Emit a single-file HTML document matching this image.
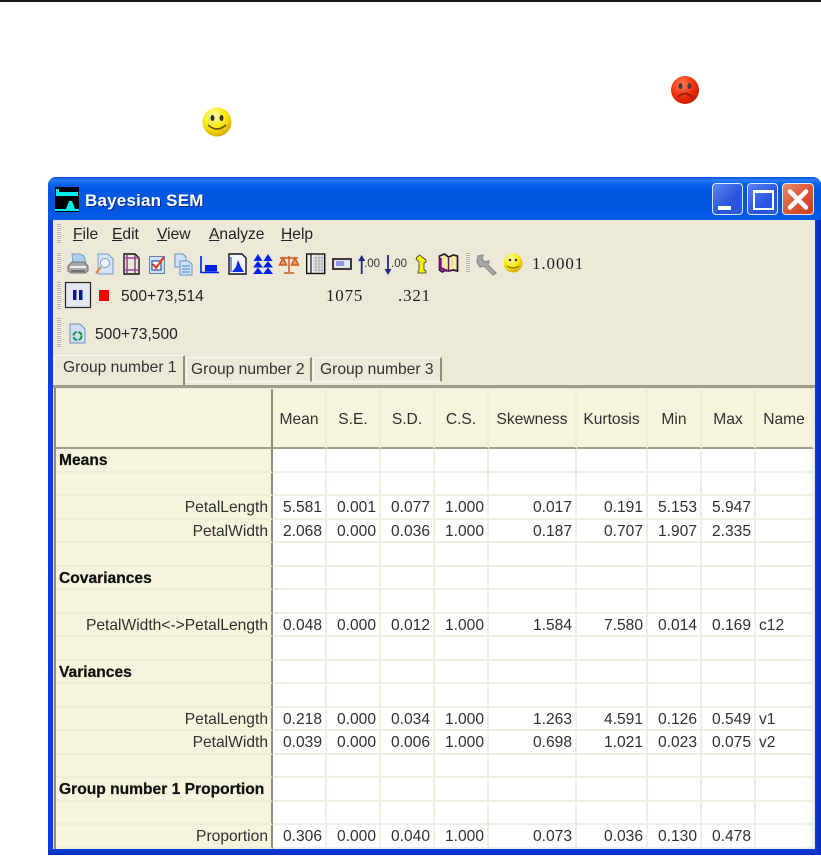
<!DOCTYPE html>
<html><head><meta charset="utf-8"><style>
html,body{margin:0;padding:0;background:#fff}
body{width:821px;height:856px;position:relative;overflow:hidden;font-family:"Liberation Sans",sans-serif;font-size:15.6px;color:#222;filter:blur(.3px)}
.a{position:absolute;white-space:nowrap;line-height:18px}
svg{position:absolute;overflow:visible}
.grip{position:absolute;width:4px;background:repeating-linear-gradient(#b5b2a0 0 1px,#f4f2e8 1px 2px)}
.grid{position:absolute;left:55px;top:389px;width:759px;display:grid;grid-template-columns:218px 54px 54px 54px 54px 88px 71px 54px 54px 58px;grid-template-rows:60px repeat(17,23.5px);background:#fff}
.grid div{box-sizing:border-box;border-right:2px solid #f0eee3;border-bottom:2px solid #f0eee3;text-align:right;padding-right:3px;line-height:24px;white-space:nowrap}
.grid div.h{background:#f5f4dc;text-align:center;padding:0;line-height:62px;border-bottom:2px solid #a09d8c;border-right-color:#eeeed8}
.grid div.l{background:#f5f4dc;border-right:2px solid #8f8c7b;border-bottom-color:#eeeed8;padding-right:3px}
.grid div.b{font-weight:bold;text-align:left;padding-left:4px;-webkit-text-stroke:.25px #111;color:#111}
.grid div.h.l{border-right:2px solid #8f8c7b;border-bottom:2px solid #a09d8c}
.grid div.n{text-align:left;padding-left:3px}
.btn{position:absolute;top:183px;width:31px;height:32px;box-sizing:border-box;border:1px solid #dfe8fb;border-radius:4px}
.s{font-family:"Liberation Serif",serif;font-size:17px;letter-spacing:.4px}
</style></head><body>
<div style="position:absolute;left:0;top:0;width:821px;height:2px;background:#1a1a1a"></div>

<svg style="left:670px;top:75px" width="30" height="30" viewBox="0 0 30 30"><defs><radialGradient id="r" cx=".4" cy=".3" r=".8"><stop offset="0" stop-color="#ff7a50"/><stop offset=".55" stop-color="#f0300a"/><stop offset="1" stop-color="#b81400"/></radialGradient><radialGradient id="y" cx=".4" cy=".3" r=".8"><stop offset="0" stop-color="#fffbb0"/><stop offset=".5" stop-color="#fce80c"/><stop offset="1" stop-color="#d09c00"/></radialGradient></defs><circle cx="15" cy="15" r="14" fill="url(#r)"/><ellipse cx="10.5" cy="11" rx="2" ry="3" fill="#4d3a3a"/><ellipse cx="19.5" cy="11" rx="2" ry="3" fill="#4d3a3a"/><path d="M8 22Q15 15 22 22" fill="none" stroke="#8a2010" stroke-width="1.6"/></svg>
<svg style="left:202px;top:107px" width="30" height="30" viewBox="0 0 30 30"><circle cx="15" cy="15" r="14.5" fill="url(#y)"/><ellipse cx="10.5" cy="11" rx="2" ry="3" fill="#333"/><ellipse cx="19.5" cy="11" rx="2" ry="3" fill="#333"/><path d="M6 18Q15 26 24 18" fill="none" stroke="#6a5a10" stroke-width="1.6"/></svg>

<!-- window -->
<div style="position:absolute;left:48px;top:177px;width:773px;height:678px;background:#0a3fd8;border-radius:8px 8px 0 0"></div>
<div style="position:absolute;left:48px;top:177px;width:773px;height:43px;border-radius:8px 8px 0 0;background:linear-gradient(#0a5ce0 0,#0a5ce0 1px,#2a7cf5 3px,#0a62ec 7px,#0058e2 14px,#0056de 30px,#0258e4 38px,#0a5ce8 43px)"></div>
<div style="position:absolute;left:48px;top:849px;width:773px;height:6px;background:linear-gradient(#0a3ee0,#0a28b8)"></div>
<div style="position:absolute;left:815px;top:220px;width:6px;height:635px;background:linear-gradient(90deg,#0a3ee0,#0a28b8)"></div>
<div style="position:absolute;left:53px;top:220px;width:762px;height:629px;background:#ece9d8"></div>

<svg style="left:55px;top:187px" width="24" height="25" viewBox="0 0 24 25"><rect width="24" height="25" fill="#000"/><rect x="1" y="2" width="5" height="7" fill="#0ee"/><rect x="1" y="5" width="22" height="4" fill="#0ee"/><rect x="4" y="2" width="19" height="3" fill="#000"/><path d="M11 22L14 14H17L20 22Z" fill="#0ee"/><rect x="0" y="22" width="24" height="2" fill="#0ee"/></svg>
<div class="a" style="left:85px;top:192px;color:#fff;font-weight:bold;font-size:17px;letter-spacing:.2px;text-shadow:1px 1px 0 #0a2a90">Bayesian SEM</div>

<div class="btn" style="left:712px;background:linear-gradient(135deg,#5b84ee,#2a55dc 60%,#2b5cdc)"><div style="position:absolute;left:5px;top:22px;width:13px;height:4px;background:#fff"></div></div>
<div class="btn" style="left:747px;background:linear-gradient(135deg,#5b84ee,#2a55dc 60%,#2b5cdc)"><div style="position:absolute;left:5px;top:6px;width:21px;height:20px;box-sizing:border-box;border:2px solid #fff;border-top-width:3px"></div></div>
<div class="btn" style="left:782px;width:32px;background:linear-gradient(135deg,#e88a6c,#d8502c 60%,#c84020)"><svg style="left:3px;top:4px" width="24" height="23" viewBox="0 0 24 23"><path d="M4 3.5L20 19.5M20 3.5L4 19.5" stroke="#fff" stroke-width="4.5" stroke-linecap="round"/></svg></div>

<!-- menu -->
<div class="grip" style="left:57px;top:224px;height:19px"></div>
<div class="a" style="left:73px;top:226px"><u>F</u>ile</div>
<div class="a" style="left:112px;top:226px"><u>E</u>dit</div>
<div class="a" style="left:157px;top:226px"><u>V</u>iew</div>
<div class="a" style="left:209px;top:226px"><u>A</u>nalyze</div>
<div class="a" style="left:281px;top:226px"><u>H</u>elp</div>

<!-- toolbar -->
<div class="grip" style="left:57px;top:253px;height:19px"></div>
<svg style="left:0;top:0" width="821" height="300" viewBox="0 0 821 300">
<!-- printer -->
<path d="M72 254h8l4 2 2 7H73z" fill="#a8d0f0" stroke="#7ea0c4"/><path d="M68 266l4-4h12l4 4v5l-3 2H71l-3-2z" fill="#a8a8a8" stroke="#707070"/><path d="M70 267h16" stroke="#f0f0f0" stroke-width="2"/><path d="M71 271h14" stroke="#606060" stroke-width="1.5"/>
<!-- page zoom -->
<path d="M98 254h10l5 5v15H98z" fill="#d2e4f8" stroke="#7a9cc8"/><circle cx="105" cy="263" r="4.5" fill="#eaf4ff" stroke="#8a9ab8"/><path d="M101 267l-5 6" stroke="#d89040" stroke-width="2.2"/>
<!-- page -->
<path d="M124 254h11l4 4v16h-15z" fill="#ece9d8" stroke="#111" stroke-width="1.4"/><path d="M127 255v18M135 255v18M124 258h15M124 270h15" stroke="#a040a0" stroke-width="1.6" fill="none"/>
<!-- check -->
<rect x="149.500" y="256.500" width="15" height="17" fill="#cfe0f6" stroke="#6080b0"/><rect x="152" y="261" width="9" height="9" fill="#fff" stroke="#3050a0" stroke-width="1.2"/><path d="M153 264l3 4 8-11" fill="none" stroke="#e83010" stroke-width="2"/>
<!-- copy -->
<path d="M175 254h8l3 3v10h-11z" fill="#cfe3f8" stroke="#6a90c8"/><path d="M180 261h8l4 3v11h-12z" fill="#cfe3f8" stroke="#6a90c8"/><path d="M182 266h8M182 269h8M182 272h8" stroke="#3a88d0"/>
<!-- chart -->
<path d="M201 256v16.500h18" fill="none" stroke="#0020e8" stroke-width="1.6"/><rect x="205" y="265" width="12" height="6.500" fill="#0020e8"/>
<!-- chart2 -->
<path d="M229 254h13l4 4v16h-17z" fill="#f4f6ff" stroke="#111" stroke-width="1.4"/><path d="M232 272l4-5 2-7 3 7 3 5z" fill="#0030e0"/><path d="M231 257v15" stroke="#0030e0"/>
<!-- triangles -->
<g fill="#0020f0"><path d="M253.500 261l4.500-7 4.500 7zM263.500 261l4.500-7 4.500 7zM253 267.500l5-6.500 5 6.500zM263 267.500l5-6.500 5 6.500zM253 274l5-6.500 5 6.500zM263 274l5-6.500 5 6.500z"/></g>
<!-- scale -->
<g fill="none" stroke="#c85a20" stroke-width="1.5"><path d="M280 258h18M289 256v16M284 273h10"/><path d="M279.500 265l3.500-7 3.500 7zM291.500 265l3.500-7 3.500 7z" fill="#f0a070"/></g>
<!-- table -->
<rect x="306.700" y="254" width="18" height="19.500" fill="#f0f0ee" stroke="#111" stroke-width="1.4"/><path d="M311 254v19.500" stroke="#111" stroke-width="1.2"/><path d="M313 258h11M313 261h11M313 264h11M313 267h11M313 270h11M316 255v18M319 255v18M322 255v18" stroke="#999" stroke-width=".8"/>
<!-- rect -->
<rect x="333" y="259" width="18" height="10" fill="#e4e4ec" stroke="#111" stroke-width="1.6"/><rect x="336" y="261" width="8" height="5" fill="#8f98e0"/>
<!-- arrows -->
<path d="M361.700 257v17" stroke="#202880" stroke-width="1.8"/><path d="M358.200 261l3.500-6 3.500 6z" fill="#202880"/>
<path d="M388 255v17" stroke="#202880" stroke-width="1.8"/><path d="M384.500 269l3.500 6 3.500-6z" fill="#202880"/>
<!-- hand -->
<path d="M417 257l3-2 2 2 4 3v2l-2 1v7l2 1v2h-8v-2l1-1v-8l-3-3z" fill="#f8f000" stroke="#333" stroke-width=".8"/>
<!-- book -->
<path d="M439.500 256l5-2 4 3 5-2 4 1v15l-4-1-5 1-3-1-3 2-3-2z" fill="#f4eea0" stroke="#301030" stroke-width="1.7"/><path d="M448.500 257v14" stroke="#601060" stroke-width="1.4"/><path d="M440.500 258v10l7 3" stroke="#801080" stroke-width="2.5" fill="none"/><path d="M452 258v9" stroke="#e8e0a0" stroke-width="2"/>
<!-- wrench -->
<path d="M478 256l5-1-1 4 3 3 4-1 0 0-1 4 8 8-3 2-9-9-4 1-3-5z" fill="#a8a8a8" stroke="#8a8a8a" stroke-width="1.2"/>
<!-- smile -->
<circle cx="513" cy="263" r="9.500" fill="url(#y)"/><circle cx="510" cy="260" r="1.300" fill="#333"/><circle cx="516" cy="260" r="1.300" fill="#333"/><path d="M507 266q6 4 12 0" fill="none" stroke="#6a5a10"/>
<!-- pause -->
<rect x="65.500" y="282.500" width="25" height="25" fill="#e4e6f0" stroke="#222" stroke-width="1.200"/><path d="M73 290h3.500v10H73zM79 290h3.500v10H79z" fill="#0a1a80"/>
<rect x="99" y="290" width="10" height="11" fill="#f00"/>
</svg>
<div class="a" style="left:364px;top:255px;font-size:11.5px;color:#333">.00</div>
<div class="a" style="left:391px;top:255px;font-size:11.5px;color:#333">.00</div>
<div class="grip" style="left:466px;top:253px;height:20px"></div>
<div class="a s" style="left:532px;top:255px;letter-spacing:.9px">1.0001</div>

<div class="grip" style="left:57px;top:282px;height:27px"></div>
<div class="a" style="left:121px;top:288px">500+73,514</div>
<div class="a s" style="left:326px;top:287px;letter-spacing:.8px">1075</div>
<div class="a s" style="left:398px;top:287px;letter-spacing:.8px">.321</div>

<div class="grip" style="left:57px;top:318px;height:30px"></div>
<svg style="left:69px;top:323px" width="17" height="21" viewBox="0 0 17 21"><path d="M1 1h10l5 5v14H1z" fill="#cfe0f6" stroke="#7090c0"/><circle cx="8.500" cy="13" r="4" fill="none" stroke="#189040" stroke-width="2" stroke-dasharray="5 1.500"/></svg>
<div class="a" style="left:95px;top:326px">500+73,500</div>

<!-- tabs -->
<div style="position:absolute;left:54px;top:355px;width:131px;height:30px;box-sizing:border-box;border:1px solid #fbfaf4;border-right:2px solid #8f8c7b;border-bottom:0;border-radius:2px 2px 0 0"></div>
<div style="position:absolute;left:186px;top:357px;width:126px;height:25px;box-sizing:border-box;border-top:1px solid #fbfaf4;border-left:1px solid #fbfaf4;border-right:2px solid #8f8c7b;border-bottom:1px solid #fbfaf4"></div>
<div style="position:absolute;left:313px;top:357px;width:129px;height:25px;box-sizing:border-box;border-top:1px solid #fbfaf4;border-left:1px solid #fbfaf4;border-right:2px solid #8f8c7b;border-bottom:1px solid #fbfaf4"></div>
<div class="a" style="left:63px;top:359px;color:#333">Group number 1</div>
<div class="a" style="left:191px;top:361px;color:#333">Group number 2</div>
<div class="a" style="left:320px;top:361px;color:#333">Group number 3</div>
<div style="position:absolute;left:53px;top:385px;width:762px;height:3px;background:#a09d8c"></div>

<div class="grid" style="color:#303030">
<div class="h l"></div><div class="h">Mean</div><div class="h">S.E.</div><div class="h">S.D.</div><div class="h">C.S.</div><div class="h">Skewness</div><div class="h">Kurtosis</div><div class="h">Min</div><div class="h">Max</div><div class="h">Name</div>

<div class="l b">Means</div><div></div><div></div><div></div><div></div><div></div><div></div><div></div><div></div><div></div>
<div class="l"></div><div></div><div></div><div></div><div></div><div></div><div></div><div></div><div></div><div></div>
<div class="l">PetalLength</div><div>5.581</div><div>0.001</div><div>0.077</div><div>1.000</div><div>0.017</div><div>0.191</div><div>5.153</div><div>5.947</div><div></div>
<div class="l">PetalWidth</div><div>2.068</div><div>0.000</div><div>0.036</div><div>1.000</div><div>0.187</div><div>0.707</div><div>1.907</div><div>2.335</div><div></div>
<div class="l"></div><div></div><div></div><div></div><div></div><div></div><div></div><div></div><div></div><div></div>
<div class="l b">Covariances</div><div></div><div></div><div></div><div></div><div></div><div></div><div></div><div></div><div></div>
<div class="l"></div><div></div><div></div><div></div><div></div><div></div><div></div><div></div><div></div><div></div>
<div class="l">PetalWidth&lt;-&gt;PetalLength</div><div>0.048</div><div>0.000</div><div>0.012</div><div>1.000</div><div>1.584</div><div>7.580</div><div>0.014</div><div>0.169</div><div class="n">c12</div>
<div class="l"></div><div></div><div></div><div></div><div></div><div></div><div></div><div></div><div></div><div></div>
<div class="l b">Variances</div><div></div><div></div><div></div><div></div><div></div><div></div><div></div><div></div><div></div>
<div class="l"></div><div></div><div></div><div></div><div></div><div></div><div></div><div></div><div></div><div></div>
<div class="l">PetalLength</div><div>0.218</div><div>0.000</div><div>0.034</div><div>1.000</div><div>1.263</div><div>4.591</div><div>0.126</div><div>0.549</div><div class="n">v1</div>
<div class="l">PetalWidth</div><div>0.039</div><div>0.000</div><div>0.006</div><div>1.000</div><div>0.698</div><div>1.021</div><div>0.023</div><div>0.075</div><div class="n">v2</div>
<div class="l"></div><div></div><div></div><div></div><div></div><div></div><div></div><div></div><div></div><div></div>
<div class="l b">Group number 1 Proportion</div><div></div><div></div><div></div><div></div><div></div><div></div><div></div><div></div><div></div>
<div class="l"></div><div></div><div></div><div></div><div></div><div></div><div></div><div></div><div></div><div></div>
<div class="l">Proportion</div><div>0.306</div><div>0.000</div><div>0.040</div><div>1.000</div><div>0.073</div><div>0.036</div><div>0.130</div><div>0.478</div><div></div>
</div>
<div style="position:absolute;left:54px;top:388px;width:2px;height:461px;background:#8f8c7b"></div>
</body></html>
